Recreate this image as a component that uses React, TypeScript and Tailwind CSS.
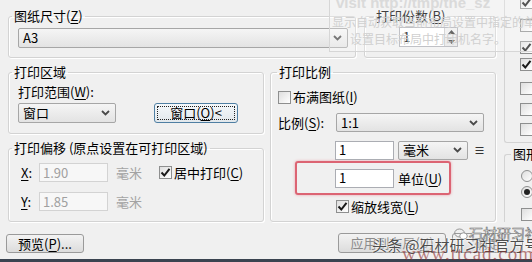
import React from 'react';

type Kids = { children?: React.ReactNode; className?: string };

// mnemonic like (Z) with the letter underlined
const K = ({ k }: { k: string }) => (
  <span>
    (<u className="underline-offset-2">{k}</u>)
  </span>
);

const Chevron = () => (
  <svg width="9" height="6" viewBox="0 0 9 6" className="shrink-0">
    <path d="M1 1l3.5 3.5L8 1" stroke="#4a4a4a" strokeWidth="1.8" fill="none" />
  </svg>
);

const Combo = ({ value, className = '' }: { value: string; className?: string }) => (
  <div
    className={`flex items-center justify-between border border-[#a6a6a6] rounded-[2px] bg-linear-to-b from-[#f5f5f5] to-[#e3e3e3] pl-[4px] pr-[5px] leading-[16px] ${className}`}
  >
    <span>{value}</span>
    <Chevron />
  </div>
);

const TextBox = ({ value, className = '', disabled }: { value: string; className?: string; disabled?: boolean }) => (
  <div
    className={`flex items-center border px-[3px] leading-[16px] ${
      disabled ? 'border-[#d3d3d3] bg-[#f7f7f7] text-[#a0a0a0]' : 'border-[#abadb3] bg-white'
    } ${className}`}
  >
    {value}
  </div>
);

const CheckBox = ({ checked }: { checked?: boolean }) => (
  <span className="w-[13px] h-[13px] shrink-0 border border-[#8e8f8f] bg-linear-to-br from-[#dedede] to-white flex items-center justify-center">
    {checked && (
      <svg width="11" height="11" viewBox="0 0 11 11">
        <path d="M1.5 5.5l2.8 3L9.5 1.8" stroke="#1a1a1a" strokeWidth="2" fill="none" />
      </svg>
    )}
  </span>
);

const Radio = ({ on }: { on?: boolean }) => (
  <span className="w-[12px] h-[12px] shrink-0 rounded-full border border-[#8e8f8f] bg-linear-to-br from-[#dedede] to-white flex items-center justify-center">
    {on && <span className="w-[6px] h-[6px] rounded-full bg-[#222]" />}
  </span>
);

const Group = ({ title, className = '', legendClass = '', children }: Kids & { title: React.ReactNode; legendClass?: string }) => (
  <fieldset
    className={`border border-[#d3d3d3] rounded-[3px] shadow-[1px_1px_0_#fff,inset_1px_1px_0_#fff] ${className}`}
  >
    <legend className={`px-[2px] leading-[16px] ${legendClass}`}>{title}</legend>
    {children}
  </fieldset>
);

const Btn = ({ children, className = '' }: Kids) => (
  <div
    className={`flex items-center justify-center border border-[#9a9a9a] rounded-[3px] bg-linear-to-b from-[#f3f3f3] to-[#dcdcdc] leading-[16px] ${className}`}
  >
    {children}
  </div>
);

const Spinner = ({ className = '' }: { className?: string }) => (
  <div className={`flex w-[59px] h-[20px] border border-[#abadb3] bg-white ${className}`}>
    <span className="flex-1 pl-[3px] leading-[18px]">1</span>
    <div className="w-[13px] flex flex-col border-l border-[#c9c9c9]">
      <span className="flex-1 flex items-center justify-center border-b border-[#c9c9c9] bg-[#eeeeee]">
        <svg width="7" height="4" viewBox="0 0 7 4">
          <path d="M0 4L3.5 0L7 4z" fill="#333" />
        </svg>
      </span>
      <span className="flex-1 flex items-center justify-center bg-[#e6e6e6]">
        <svg width="7" height="4" viewBox="0 0 7 4">
          <path d="M0 0L3.5 4L7 0z" fill="#333" />
        </svg>
      </span>
    </div>
  </div>
);

export default function App() {
  return (
    <div className="relative w-[532px] h-[262px] overflow-hidden bg-[#f0f0f0] flex flex-col text-[13px] text-black font-['Noto_Sans_CJK_SC',sans-serif]">
      <div className="flex flex-1 min-h-0">
        {/* window edge */}
        <div className="w-[4px] bg-[#4b5866]" />

        <div className="flex-1 flex flex-col">
          <div className="flex">
            {/* main column */}
            <div className="w-[504px] pl-[8px] flex flex-col">
              {/* paper size / copies */}
              <div className="flex mt-[8px]">
                <Group title={<>图纸尺寸<K k="Z" /></>} className="w-[348px]" legendClass="ml-[3px]">
                  <Combo value="A3" className="mt-[4px] mb-[9px] ml-[9px] w-[330px] h-[20px]" />
                </Group>
                <Group title={<>打印份数<K k="B" /></>} className="ml-[8px] w-[132px]" legendClass="ml-[9px]">
                  <Spinner className="mt-[3px] ml-[34px]" />
                </Group>
              </div>

              <div className="flex mt-[6px]">
                <div className="w-[256px] flex flex-col">
                  {/* plot area */}
                  <Group title="打印区域" legendClass="ml-[3px]">
                    <div className="mt-[5px] ml-[9px] leading-[14px]">
                      打印范围<K k="W" />:
                    </div>
                    <div className="flex items-center mt-[4px] mb-[10px] ml-[9px]">
                      <Combo value="窗口" className="w-[98px] h-[20px]" />
                      <div className="ml-[38px] w-[84px] h-[20px] p-[2px] border border-[#4f7fa3] rounded-[3px] bg-linear-to-b from-[#f4f8fb] to-[#e2e8ec]">
                        <div className="w-full h-full border border-dotted border-[#222] flex items-center justify-center leading-[14px]">
                          窗口<K k="O" />&lt;
                        </div>
                      </div>
                    </div>
                  </Group>

                  {/* plot offset */}
                  <Group title="打印偏移 (原点设置在可打印区域)" className="mt-[6px]" legendClass="ml-[3px]">
                    <div className="flex items-center mt-[7px] ml-[12px] h-[19px]">
                      <span className="w-[18px]">
                        <u className="underline-offset-2">X</u>:
                      </span>
                      <TextBox value="1.90" disabled className="w-[69px] h-[19px]" />
                      <span className="ml-[8px] text-[#a3a3a3]">毫米</span>
                      <span className="ml-[17px]">
                        <CheckBox checked />
                      </span>
                      <span className="ml-[2px]">
                        居中打印<K k="C" />
                      </span>
                    </div>
                    <div className="flex items-center mt-[10px] mb-[10px] ml-[12px] h-[19px]">
                      <span className="w-[18px]">
                        <u className="underline-offset-2">Y</u>:
                      </span>
                      <TextBox value="1.85" disabled className="w-[69px] h-[19px]" />
                      <span className="ml-[8px] text-[#a3a3a3]">毫米</span>
                    </div>
                  </Group>
                </div>

                {/* plot scale */}
                <Group title="打印比例" className="ml-[6px] w-[226px]" legendClass="ml-[6px]">
                  <div className="flex items-center mt-[10px] ml-[7px]">
                    <CheckBox />
                    <span className="ml-[2px] leading-[14px]">
                      布满图纸<K k="I" />
                    </span>
                  </div>
                  <div className="flex items-center mt-[9px] ml-[7px]">
                    <span className="w-[58px]">
                      比例<K k="S" />:
                    </span>
                    <Combo value="1:1" className="w-[148px] h-[19px]" />
                  </div>
                  <div className="flex items-center mt-[8px] ml-[64px]">
                    <TextBox value="1" className="w-[59px] h-[19px]" />
                    <Combo value="毫米" className="ml-[4px] w-[70px] h-[19px]" />
                    <span className="ml-[6px] text-[11px]">≡</span>
                  </div>
                  {/* highlighted row */}
                  <div className="mt-[1px] ml-[24px] w-[156px] h-[34px] border-2 border-[#dc6473] rounded-[3px] shadow-[0_0_3px_#eaa0aa] pt-[6px] pl-[38px] flex items-start">
                    <TextBox value="1" className="w-[59px] h-[19px]" />
                    <span className="ml-[4px] leading-[19px]">
                      单位<K k="U" />
                    </span>
                  </div>
                  <div className="flex items-center mt-[5px] ml-[65px]">
                    <CheckBox checked />
                    <span className="ml-[2px] leading-[14px]">
                      缩放线宽<K k="L" />
                    </span>
                  </div>
                </Group>
              </div>
            </div>

            {/* right panel, cut off by the window */}
            <div className="flex-1 flex flex-col">
              <div className="h-[143px] border-l border-b border-[#d3d3d3] rounded-bl-[3px] pl-[15px] flex flex-col">
                <span className="-mt-[4px]"><CheckBox checked /></span>
                <span className="mt-[10px]"><CheckBox /></span>
                <span className="mt-[9px]"><CheckBox checked /></span>
                <span className="mt-[4px]"><CheckBox checked /></span>
                <span className="mt-[11px]"><CheckBox /></span>
                <span className="mt-[8px]"><CheckBox /></span>
                <span className="mt-[7px]"><CheckBox /></span>
              </div>
              <fieldset className="flex-1 mt-[3px] border-l border-t border-[#d3d3d3] rounded-tl-[3px]">
                <legend className="ml-[6px] px-[2px] leading-[16px] whitespace-nowrap">图形方向</legend>
                <div className="mt-[8px] pl-[16px]"><Radio /></div>
                <div className="mt-[4px] pl-[16px]"><Radio on /></div>
                <div className="mt-[10px] pl-[16px]"><CheckBox /></div>
              </fieldset>
            </div>
          </div>

          {/* buttons */}
          <div className="flex items-start mt-[12px]">
            <Btn className="ml-[6px] w-[78px] h-[19px]">
              预览<K k="P" />...
            </Btn>
            <Btn className="ml-[254px] -mt-[1px] w-[108px] h-[20px] text-[#8c8c8c]">
              应用到布局<K k="U" />
            </Btn>
            <Btn className="ml-[6px] -mt-[1px] w-[71px] h-[20px] text-[#8c8c8c]">确定</Btn>
          </div>
        </div>
      </div>
      <div className="h-[3px] bg-[#3a4350]" />

      {/* faint tooltip overlay */}
      <div className="absolute left-[329px] top-[-6px] w-[215px] h-[58px] border border-[#d6d6d6] bg-white/25 pointer-events-none">
        <div className="ml-[6px] text-[15px] font-bold leading-[16px] text-[#dadada] font-['Liberation_Sans',sans-serif]">
          visit http://tmp/the_sz
        </div>
        <div className="ml-[2px] mt-[3px] text-[12px] leading-[15px] text-[#d0d0d0] whitespace-nowrap">
          显示自动获取当前布局设置中指定的单位
        </div>
        <div className="ml-[20px] mt-[2px] text-[12px] leading-[15px] text-[#d0d0d0] whitespace-nowrap">
          设置目标布局中打印机名字。
        </div>
      </div>

      {/* watermark */}
      <svg className="absolute left-[454px] top-[228px]" width="14" height="13" viewBox="0 0 14 13">
        <ellipse cx="5.5" cy="5" rx="4.8" ry="4" fill="none" stroke="#8a8a8a" strokeWidth="0.9" />
        <ellipse cx="9.5" cy="8" rx="3.8" ry="3.2" fill="#fff" stroke="#8a8a8a" strokeWidth="0.9" />
      </svg>
      <div className="absolute left-[469px] top-[225px] text-[14px] leading-[16px] text-white whitespace-nowrap [-webkit-text-stroke:0.6px_#6a6a6a]">
        石材研习社
      </div>
      <div className="absolute left-[372px] top-[236px] text-[15px] leading-[18px] text-[#2e2e2e]/85 whitespace-nowrap [text-shadow:0_0_2px_#fff,0_0_2px_#fff]">
        头条 @石材研习社官方号
      </div>
      <div className="absolute left-[402px] top-[244px] text-[19px] leading-[20px] tracking-[1px] text-[#8f2a2a]/60 whitespace-nowrap font-['Liberation_Serif',serif]">
        www.ttcad.com
      </div>
    </div>
  );
}
